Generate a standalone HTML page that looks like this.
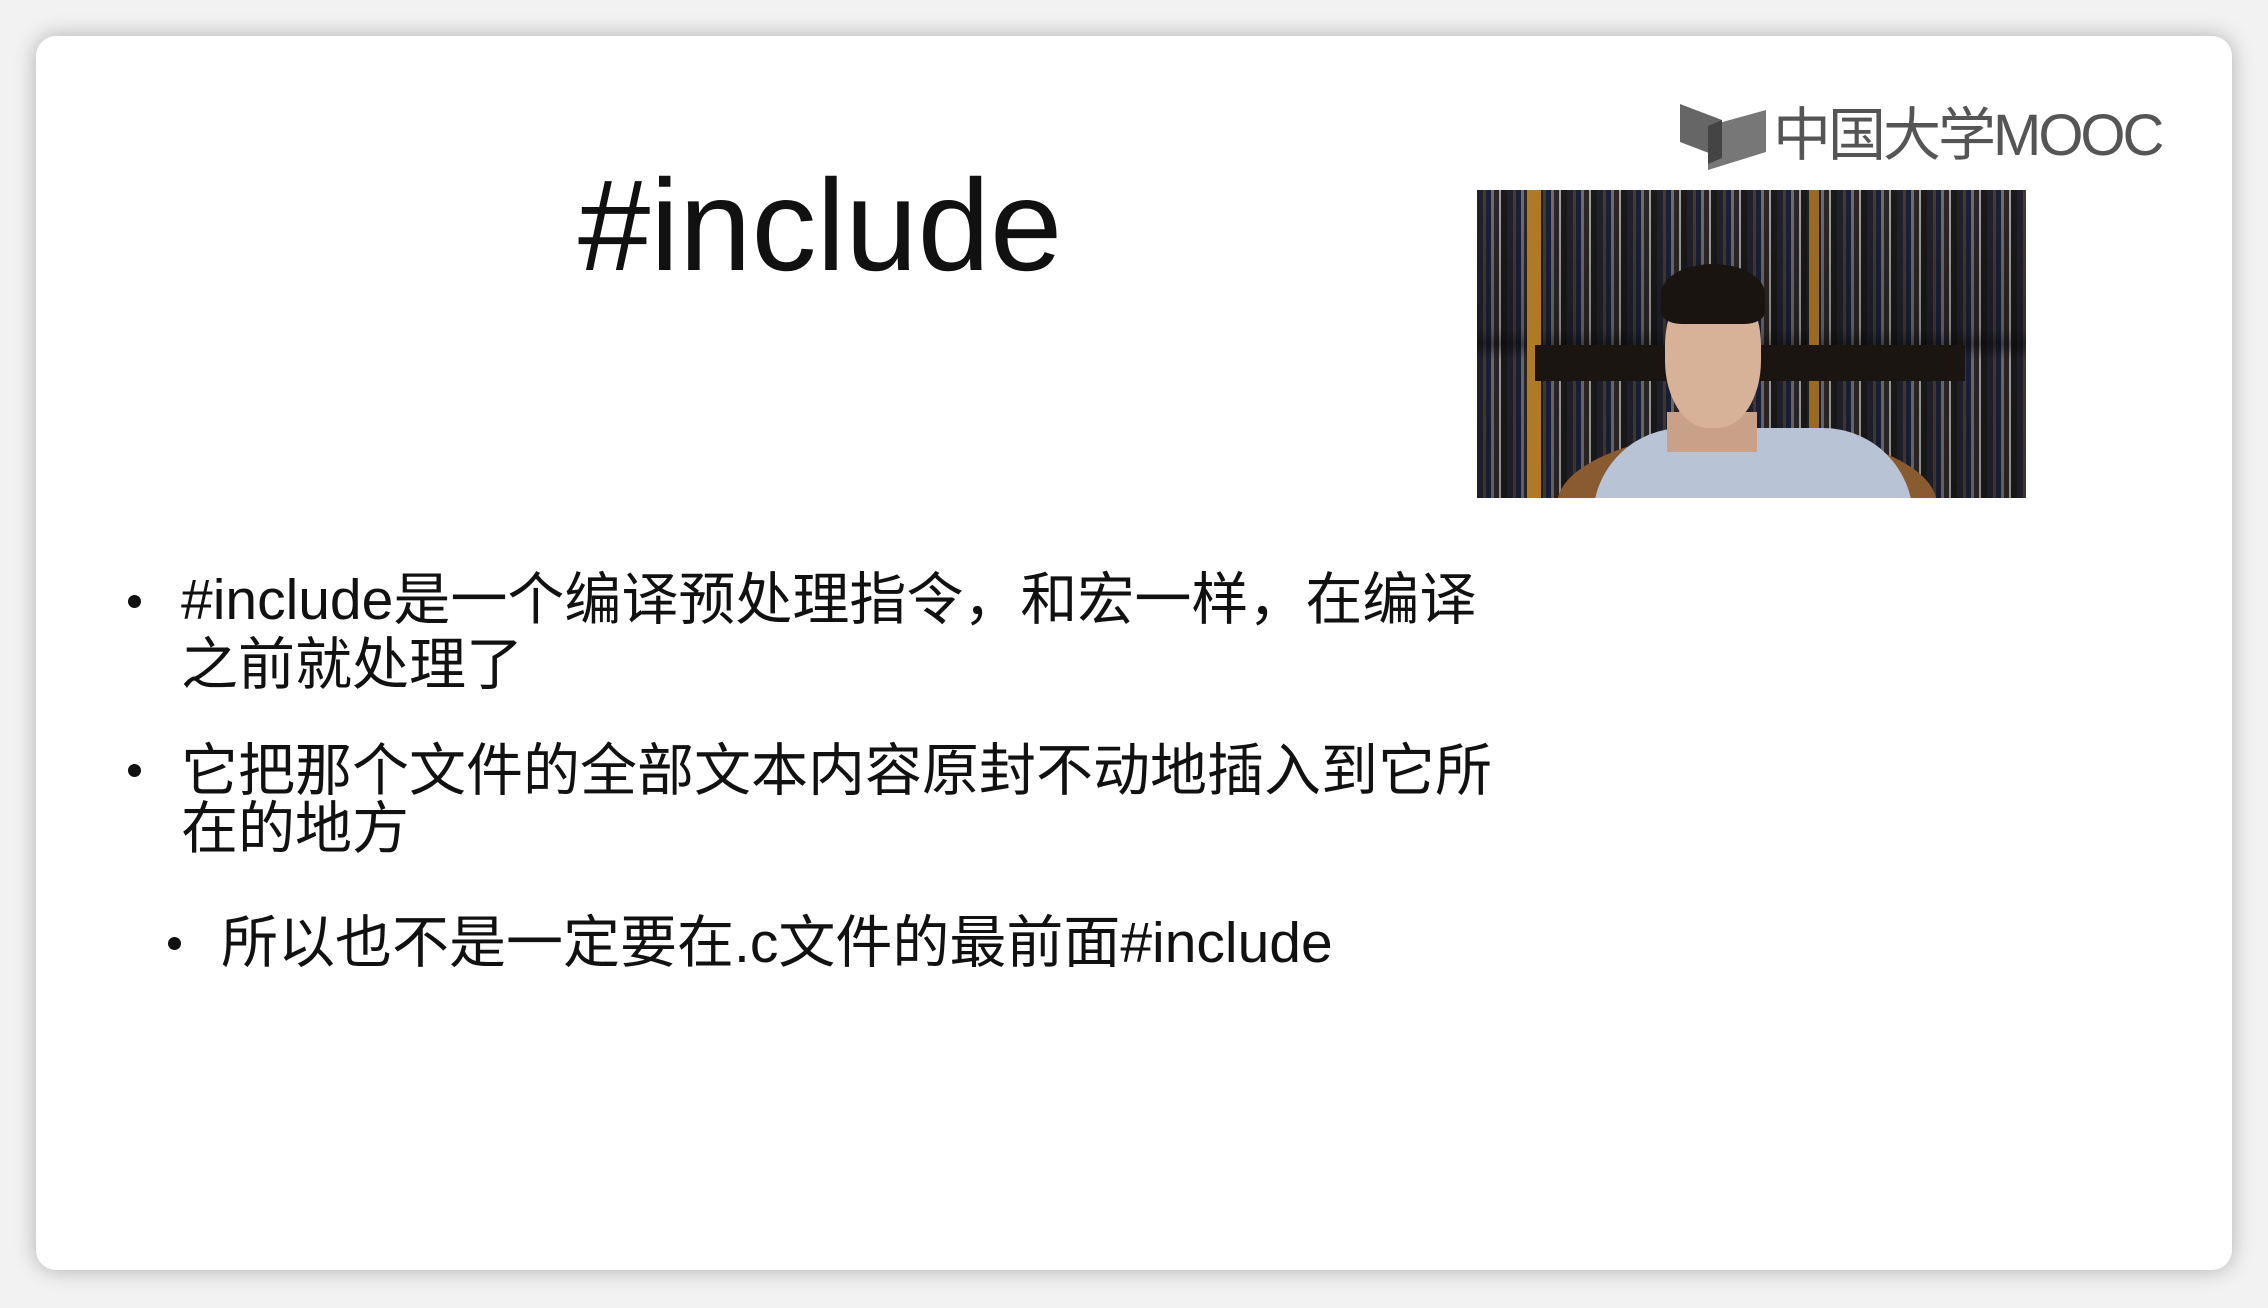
<!DOCTYPE html>
<html><head><meta charset="utf-8"><style>
html,body{margin:0;padding:0;}
body{width:2268px;height:1308px;background:#f2f2f2;position:relative;overflow:hidden;font-family:"Liberation Sans","Noto Sans CJK SC",sans-serif;color:#111;}
.card{position:absolute;left:36px;top:36px;width:2196px;height:1234px;background:#fff;border-radius:20px;box-shadow:0 0 22px rgba(0,0,0,0.28);}
.t{position:absolute;white-space:nowrap;}
.title{left:578px;top:155px;font-size:130px;line-height:140px;color:#111;}
.b{font-size:57px;line-height:64px;}
.dot{position:absolute;width:13px;height:13px;border-radius:50%;background:#111;}
.logo{position:absolute;left:1680px;top:100px;}
.logotxt{position:absolute;left:1773px;top:100px;font-size:58px;line-height:72px;color:#555;letter-spacing:-3px;white-space:nowrap;}
.video{position:absolute;left:1477px;top:190px;width:549px;height:308px;overflow:hidden;background:#1a1814;}
</style></head><body>
<div class="card"></div>
<div class="t title">#include</div>

<svg class="logo" width="90" height="72" viewBox="0 0 90 72">
<path d="M0 4 L42 20 L42 58 L0 42 Z" fill="#666"/>
<path d="M28 26 L86 10 L86 52 L28 70 Z" fill="#777"/>
<path d="M28 26 L42 20 L42 58 L28 64 Z" fill="#444"/>
</svg>
<div class="logotxt">中国大学MOOC</div>

<div class="video">
<div style="position:absolute;left:0;top:0;width:549px;height:308px;background:repeating-linear-gradient(90deg,#2a2a3a 0 6px,#5a4a3a 6px 9px,#1e2a4a 9px 14px,#8a8a8a 14px 17px,#3a3030 17px 22px,#c8c8c8 22px 24px,#202020 24px 30px);"></div>
<div style="position:absolute;left:0;top:0;width:549px;height:308px;background:linear-gradient(180deg,rgba(0,0,0,0.2),rgba(0,0,0,0.35) 45%,rgba(0,0,0,0.55) 50%,rgba(0,0,0,0.25) 55%,rgba(0,0,0,0.3));"></div>
<div style="position:absolute;left:50px;top:0;width:14px;height:308px;background:#b07a25;"></div>
<div style="position:absolute;left:332px;top:0;width:10px;height:308px;background:#9a6a20;"></div>
<div style="position:absolute;left:58px;top:155px;width:430px;height:36px;background:#1a1510;"></div>
<div style="position:absolute;left:80px;top:240px;width:380px;height:150px;border-radius:50%;background:#8a5a30;"></div>
<div style="position:absolute;left:116px;top:238px;width:320px;height:160px;border-radius:90px 90px 0 0;background:#b8c4d6;"></div>
<div style="position:absolute;left:190px;top:222px;width:90px;height:40px;background:#c9a088;"></div>
<div style="position:absolute;left:188px;top:88px;width:96px;height:150px;border-radius:45%;background:#d8b298;"></div>
<div style="position:absolute;left:184px;top:74px;width:104px;height:60px;border-radius:50% 50% 20% 20%;background:#1a1410;"></div>
</div>

<div class="dot" style="left:128px;top:595px"></div>
<div class="t b" style="left:181px;top:568px">#include是一个编译预处理指令，和宏一样，在编译</div>
<div class="t b" style="left:181px;top:633px">之前就处理了</div>
<div class="dot" style="left:128px;top:764px"></div>
<div class="t b" style="left:181px;top:739px">它把那个文件的全部文本内容原封不动地插入到它所</div>
<div class="t b" style="left:181px;top:797px">在的地方</div>
<div class="dot" style="left:168px;top:937px"></div>
<div class="t b" style="left:221px;top:911px">所以也不是一定要在.c文件的最前面#include</div>
</body></html>
